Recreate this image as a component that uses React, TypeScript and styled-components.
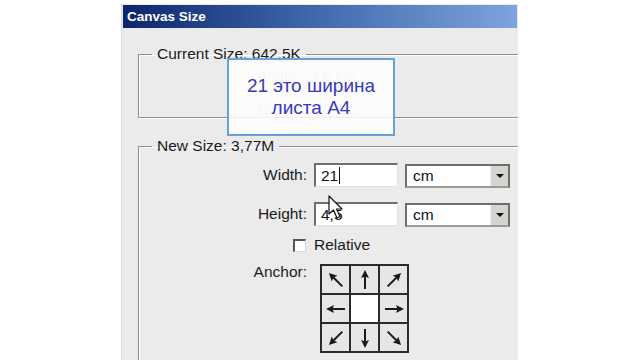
import { createGlobalStyle } from "styled-components";
import styled from "styled-components";

const GlobalStyle = createGlobalStyle`
    html, body {
        margin: 0;
        padding: 0;
        background: #ffffff;
    }

    body {
        font-family: "Liberation Sans", Arial, sans-serif;
    }
`;

const ANCHORS = [-45, 0, 45, -90, null, 90, -135, 180, 135];

export default function App() {
    return (
        <Page>
            <GlobalStyle />
            <Dialog>
                <TitleBar>Canvas Size</TitleBar>

                <Body>
                    <Group $height={72}>
                        <Legend>Current Size: 642,5K</Legend>
                        <FaintRows>
                            <span>Width: &nbsp;3,5 cm</span>
                            <span>Height: 0,8 cm</span>
                        </FaintRows>
                    </Group>

                    <Group $height={240}>
                        <Legend>New Size: 3,77M</Legend>

                        <Form>
                            <Label>Width:</Label>
                            <TextBox>
                                21<Caret />
                            </TextBox>
                            <Select>
                                <span>cm</span>
                                <DropButton>
                                    <Triangle />
                                </DropButton>
                            </Select>

                            <Label>Height:</Label>
                            <TextBox>4,5</TextBox>
                            <Select>
                                <span>cm</span>
                                <DropButton>
                                    <Triangle />
                                </DropButton>
                            </Select>
                        </Form>

                        <CheckRow>
                            <CheckBox />
                            <span>Relative</span>
                        </CheckRow>

                        <AnchorRow>
                            <Label>Anchor:</Label>
                            <AnchorGrid>
                                {ANCHORS.map((angle, i) => (
                                    <AnchorCell key={i} $center={angle === null}>
                                        {angle !== null && <Arrow angle={angle} />}
                                    </AnchorCell>
                                ))}
                            </AnchorGrid>
                        </AnchorRow>
                    </Group>
                </Body>

                <Note>
                    21 это ширина
                    <br />
                    листа A4
                </Note>

                <Cursor>
                    <svg width="18" height="26" viewBox="0 0 18 26">
                        <path
                            d="M1 1 L1 19 L5.5 15 L9 23 L12 21.5 L8.5 14 L14 14 Z"
                            fill="#ffffff"
                            stroke="#111111"
                            strokeWidth="1.2"
                            strokeLinejoin="round"
                        />
                    </svg>
                </Cursor>
            </Dialog>
        </Page>
    );
}

const Arrow = ({ angle }: { angle: number }) => (
    <svg
        width="22"
        height="22"
        viewBox="0 0 22 22"
        style={{ transform: `rotate(${angle}deg)` }}
    >
        <line x1="11" y1="20" x2="11" y2="7" stroke="#1a1a1a" strokeWidth="2" />
        <path d="M11 1 L15 9 L11 7.5 L7 9 Z" fill="#1a1a1a" />
    </svg>
);

const Page = styled.div`
    width: 640px;
    height: 360px;
    overflow: hidden;
    display: flex;
    align-items: flex-start;
    padding: 4px 0 0 121px;
    box-sizing: border-box;
`;

const Dialog = styled.div`
    position: relative;
    width: 396px;
    height: 360px;
    background: #ebebeb;
    border-left: 1px solid #dcdcdc;
    overflow: hidden;
    display: flex;
    flex-direction: column;
`;

const TitleBar = styled.div`
    flex-shrink: 0;
    height: 23px;
    margin: 1px 1px 0 1px;
    padding-left: 4px;
    display: flex;
    align-items: center;
    color: #ffffff;
    font-size: 13.5px;
    font-weight: 700;
    background: linear-gradient(to right, #0b266c 0%, #3d64a8 45%, #7ea4de 100%);
`;

const Body = styled.div`
    flex-shrink: 0;
    display: flex;
    flex-direction: column;
    gap: 20px;
    padding: 18px 0 0 16px;
`;

const Group = styled.fieldset<{ $height: number }>`
    flex-shrink: 0;
    position: relative;
    width: 420px;
    height: ${({ $height }) => $height}px;
    margin: 0;
    padding: 0;
    border: 1px solid #8f8f8f;
    box-shadow: 1px 1px 0 #ffffff, inset 1px 1px 0 #ffffff;
    box-sizing: border-box;
`;

const Legend = styled.legend`
    margin-left: 13px;
    padding: 0 5px;
    font-size: 15.5px;
    color: #1a1a1a;
    line-height: 16px;
`;

const FaintRows = styled.div`
    display: flex;
    flex-direction: column;
    gap: 14px;
    margin-top: 6px;
    padding-left: 118px;
    font-size: 15.5px;
    line-height: 18px;
    color: #c4c4c4;
`;

const Form = styled.div`
    display: grid;
    grid-template-columns: 168px 84px 105px;
    column-gap: 7px;
    row-gap: 13px;
    align-items: center;
    margin-top: 8px;
`;

const Label = styled.div`
    font-size: 15.5px;
    color: #1a1a1a;
    text-align: right;
`;

const TextBox = styled.div`
    height: 24px;
    display: flex;
    align-items: center;
    padding-left: 5px;
    box-sizing: border-box;
    background: #ffffff;
    border-top: 2px solid #6e6e6e;
    border-left: 2px solid #6e6e6e;
    border-bottom: 1px solid #e2e2e2;
    border-right: 1px solid #e2e2e2;
    font-size: 15.5px;
    color: #111111;
`;

const Caret = styled.span`
    display: inline-block;
    width: 1px;
    height: 17px;
    margin-left: 1px;
    background: #111111;
`;

const Select = styled.div`
    height: 24px;
    margin-top: 2px;
    display: flex;
    align-items: center;
    justify-content: space-between;
    padding-left: 6px;
    box-sizing: border-box;
    background: #ffffff;
    border-top: 2px solid #6e6e6e;
    border-left: 2px solid #6e6e6e;
    border-bottom: 2px solid #9a9a9a;
    border-right: 2px solid #6e6e6e;
    font-size: 15.5px;
    color: #111111;
`;

const DropButton = styled.div`
    width: 17px;
    height: 100%;
    display: flex;
    align-items: center;
    justify-content: center;
    background: #d6d4cf;
    border-left: 1px solid #f4f4f4;
`;

const Triangle = styled.div`
    width: 0;
    height: 0;
    border-left: 4px solid transparent;
    border-right: 4px solid transparent;
    border-top: 4px solid #111111;
`;

const CheckRow = styled.div`
    display: flex;
    align-items: center;
    gap: 8px;
    margin: 9px 0 0 154px;
    font-size: 15.5px;
    color: #1a1a1a;
`;

const CheckBox = styled.div`
    width: 13px;
    height: 13px;
    box-sizing: border-box;
    background: #ffffff;
    border-top: 2px solid #555555;
    border-left: 2px solid #555555;
    border-bottom: 1px solid #d8d8d8;
    border-right: 1px solid #d8d8d8;
`;

const AnchorRow = styled.div`
    display: grid;
    grid-template-columns: 168px auto;
    column-gap: 13px;
    align-items: start;
    margin-top: 10px;

    ${Label} {
        margin-top: -1px;
    }
`;

const AnchorGrid = styled.div`
    display: grid;
    grid-template-columns: repeat(3, 27px);
    grid-template-rows: repeat(3, 27px);
    gap: 2px;
    width: fit-content;
    padding: 2px;
    background: #2b2b2b;
`;

const AnchorCell = styled.div<{ $center: boolean }>`
    display: flex;
    align-items: center;
    justify-content: center;
    background: ${({ $center }) => ($center ? "#ffffff" : "#e6e6e6")};
`;

const Note = styled.div`
    position: absolute;
    left: 105px;
    top: 54px;
    width: 168px;
    height: 78px;
    box-sizing: border-box;
    display: flex;
    align-items: center;
    justify-content: center;
    text-align: center;
    background: rgba(255, 255, 255, 0.85);
    border: 2px solid #67a3d8;
    color: #3a3ab8;
    font-size: 19px;
    line-height: 22px;
`;

const Cursor = styled.div`
    position: absolute;
    left: 206px;
    top: 191px;
    line-height: 0;
`;
